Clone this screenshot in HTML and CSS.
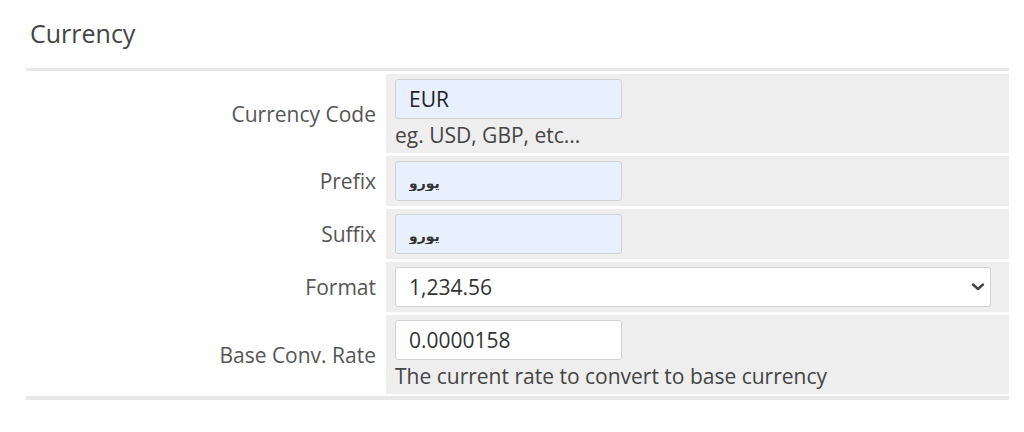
FILE: index.html
```html
<!DOCTYPE html>
<html>
<head>
<meta charset="utf-8">
<link rel="stylesheet" href="styles.css">
</head>
<body>
<div class="page">
  <h2 class="title">Currency</h2>
  <div class="form">
    <div class="row">
      <label class="label">Currency Code</label>
      <div class="cell">
        <input class="input filled" type="text" value="EUR">
        <div class="help">eg. USD, GBP, etc...</div>
      </div>
    </div>
    <div class="row">
      <label class="label">Prefix</label>
      <div class="cell">
        <input class="input filled arabic" type="text" value="يورو">
      </div>
    </div>
    <div class="row">
      <label class="label">Suffix</label>
      <div class="cell">
        <input class="input filled arabic" type="text" value="يورو">
      </div>
    </div>
    <div class="row">
      <label class="label">Format</label>
      <div class="cell">
        <div class="select">
          <span>1,234.56</span>
          <svg class="chev" width="14" height="10" viewBox="0 0 14 10"><path d="M2 2.5 L7 7 L12 2.5" fill="none" stroke="#444" stroke-width="2.4" stroke-linecap="round" stroke-linejoin="round"/></svg>
        </div>
      </div>
    </div>
    <div class="row">
      <label class="label">Base Conv. Rate</label>
      <div class="cell">
        <input class="input" type="text" value="0.0000158">
        <div class="help">The current rate to convert to base currency</div>
      </div>
    </div>
  </div>
</div>
</body>
</html>
```
FILE: styles.css
```css
* { box-sizing: border-box; }
html, body { margin: 0; padding: 0; background: #fff; }
body { font-family: "Open Sans", "Liberation Sans", sans-serif; color: #444; }
.page { padding: 17px 0 0 26px; width: 1009px; }
.title {
  margin: 0 0 19px 4px;
  font-size: 25px;
  font-weight: 400;
  line-height: 32px;
  color: #444;
}
.form {
  border-top: 3px solid #e8e8e8;
  border-bottom: 4px solid #e8e8e8;
  padding: 3px 0 2px;
  display: flex;
  flex-direction: column;
  gap: 3px;
}
.row {
  display: grid;
  grid-template-columns: 360px 1fr;
}
.label {
  align-self: center;
  text-align: right;
  padding-right: 10px;
  font-size: 21px;
  line-height: 28px;
  color: #555;
}
.cell {
  background: #eeeeee;
  padding: 5px 9px 5px;
}
.input {
  display: block;
  width: 227px;
  height: 40px;
  border: 1px solid #d2d2d2;
  border-radius: 3px;
  background: #fff;
  padding: 0 13px;
  font-family: "Open Sans", "Liberation Sans", sans-serif;
  font-size: 21px;
  color: #333;
  outline: none;
}
.input.filled { background: #e8f0fe; color: #222; }
.input.arabic { font-family: "DejaVu Sans", "Noto Sans", sans-serif; font-size: 14px; font-weight: 700; padding-top: 4px; color: #333; }
.help {
  font-size: 21px;
  line-height: 25px;
  color: #444;
  padding-top: 4px;
}
.select {
  width: 596px;
  height: 40px;
  border: 1px solid #d2d2d2;
  border-radius: 3px;
  background: #fff;
  display: flex;
  align-items: center;
  justify-content: space-between;
  padding: 0 5px 0 13px;
  font-size: 21px;
  color: #333;
}
.chev { display: block; }
```
